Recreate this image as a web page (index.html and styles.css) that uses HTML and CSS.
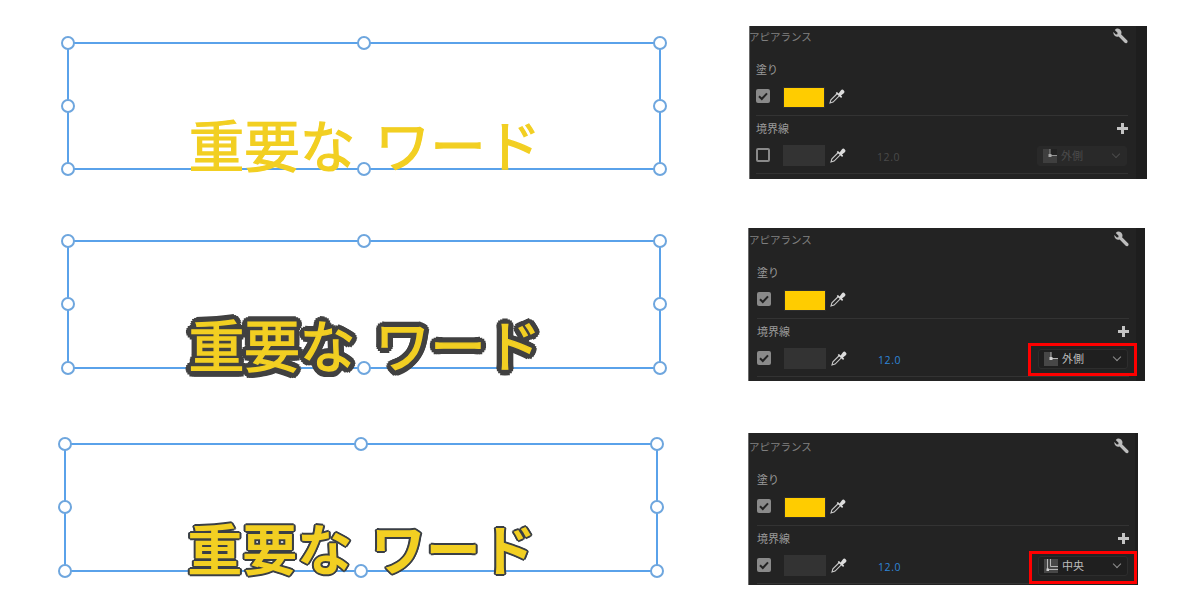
FILE: index.html
```html
<!DOCTYPE html>
<html lang="ja">
<head>
<meta charset="utf-8">
<title>アピアランス</title>
<link rel="stylesheet" href="styles.css">
</head>
<body>
<svg class="defs" width="0" height="0" aria-hidden="true">
  <symbol id="wrench" viewBox="0 0 16 16"><path d="M5.200.2a4.300 4.300 0 0 0-4.100 1.300L4 4.400 3.900 6.200 2.200 6.400-.4 3.800A4.300 4.300 0 0 0 5.200 8.600L11.700 15.200a1.800 1.800 0 0 0 3-.9 1.800 1.800 0 0 0-.5-1.700L7.800 6.200A4.300 4.300 0 0 0 5.200.2z" transform="translate(.8 0)"/></symbol>
  <symbol id="dropper" viewBox="0 0 16 16"><path class="drop-line" d="M8.800 5 1.900 11.900 1 15l3.100-.9L11 7.200"/><path class="drop-fill" d="M7.800 4 9.600 5.400l2.200-3a2 2 0 0 1 3 0 2 2 0 0 1 0 2.800L12 7.400l1.200 1.400-1.100 1.100-5.400-4.800z"/></symbol>
  <symbol id="check" viewBox="0 0 14 14"><path d="M3 7.300 5.800 10 11 4.300" fill="none" stroke-width="2"/></symbol>
  <symbol id="corner-out" viewBox="0 0 14 14"><path class="corner-bg" d="M0 0h14v14H0z"/><path class="corner-clear" d="M7 0h7v6H7z"/><path class="corner-ln" d="M7 0v6.500h7" fill="none"/><path class="corner-dot" d="M5.500 5h3v3h-3z"/></symbol>
  <symbol id="corner-mid" viewBox="0 0 14 14"><path class="corner-bg" d="M0 0h14v14H0z"/><path class="corner-ln" d="M3.500 0v10.500h10.500M6.500 0v7.500h7.500" fill="none"/><path class="corner-dot" d="M2.500 9.500h2.500v2.500H2.500z"/></symbol>
</svg>

<section class="row row-1">
  <div class="stage">
    <div class="frame">
      <p class="word">重要な ワード</p>
      <i class="handle tl"></i><i class="handle tc"></i><i class="handle tr"></i>
      <i class="handle ml"></i><i class="handle mr"></i>
      <i class="handle bl"></i><i class="handle bc"></i><i class="handle br"></i>
    </div>
  </div>
  <div class="panel">
    <div class="panel-body">
      <div class="title-row"><span class="title">アピアランス</span><svg class="wrench"><use href="#wrench"/></svg></div>
      <div class="label-row first">塗り</div>
      <div class="control fill-row">
        <span class="box on"><svg><use href="#check"/></svg></span>
        <span class="swatch"></span>
        <svg class="dropper"><use href="#dropper"/></svg>
      </div>
      <div class="label-row second">境界線<span class="plus"></span></div>
      <div class="control stroke-row dim">
        <span class="box"></span>
        <span class="swatch dark"></span>
        <svg class="dropper"><use href="#dropper"/></svg>
        <span class="value">12.0</span>
        <span class="dropdown"><svg class="corner"><use href="#corner-out"/></svg><span class="dd-text">外側</span><span class="chev"></span></span>
      </div>
    </div>
    <div class="strip"></div>
  </div>
</section>

<section class="row row-2">
  <div class="stage">
    <div class="frame">
      <p class="word outer">重要な ワード</p>
      <i class="handle tl"></i><i class="handle tc"></i><i class="handle tr"></i>
      <i class="handle ml"></i><i class="handle mr"></i>
      <i class="handle bl"></i><i class="handle bc"></i><i class="handle br"></i>
    </div>
  </div>
  <div class="panel">
    <div class="panel-body">
      <div class="title-row"><span class="title">アピアランス</span><svg class="wrench"><use href="#wrench"/></svg></div>
      <div class="label-row first">塗り</div>
      <div class="control fill-row">
        <span class="box on"><svg><use href="#check"/></svg></span>
        <span class="swatch"></span>
        <svg class="dropper"><use href="#dropper"/></svg>
      </div>
      <div class="label-row second">境界線<span class="plus"></span></div>
      <div class="control stroke-row">
        <span class="box on"><svg><use href="#check"/></svg></span>
        <span class="swatch dark"></span>
        <svg class="dropper"><use href="#dropper"/></svg>
        <span class="value">12.0</span>
        <span class="dropdown marked"><svg class="corner"><use href="#corner-out"/></svg><span class="dd-text">外側</span><span class="chev"></span></span>
      </div>
    </div>
    <div class="strip"></div>
  </div>
</section>

<section class="row row-3">
  <div class="stage">
    <div class="frame">
      <p class="word center">重要な ワード</p>
      <i class="handle tl"></i><i class="handle tc"></i><i class="handle tr"></i>
      <i class="handle ml"></i><i class="handle mr"></i>
      <i class="handle bl"></i><i class="handle bc"></i><i class="handle br"></i>
    </div>
  </div>
  <div class="panel">
    <div class="panel-body">
      <div class="title-row"><span class="title">アピアランス</span><svg class="wrench"><use href="#wrench"/></svg></div>
      <div class="label-row first">塗り</div>
      <div class="control fill-row">
        <span class="box on"><svg><use href="#check"/></svg></span>
        <span class="swatch"></span>
        <svg class="dropper"><use href="#dropper"/></svg>
      </div>
      <div class="label-row second">境界線<span class="plus"></span></div>
      <div class="control stroke-row">
        <span class="box on"><svg><use href="#check"/></svg></span>
        <span class="swatch dark"></span>
        <svg class="dropper"><use href="#dropper"/></svg>
        <span class="value">12.0</span>
        <span class="dropdown marked"><svg class="corner"><use href="#corner-mid"/></svg><span class="dd-text">中央</span><span class="chev"></span></span>
      </div>
    </div>
    <div class="strip"></div>
  </div>
</section>
</body>
</html>
```
FILE: styles.css
```css
* { box-sizing: border-box; }
html, body { margin: 0; padding: 0; }
body {
  width: 1200px;
  height: 600px;
  background: #fff;
  overflow: hidden;
  font-family: "Noto Sans CJK JP", "Noto Sans", sans-serif;
}
.defs { display: block; height: 0; }

/* rows */
.row { display: flex; align-items: flex-start; }
.row-1 { height: 200px; }
.row-2 { height: 205px; }
.row-3 { height: 195px; }

.stage { flex: none; }
.row-1 .stage { padding: 42px 0 0 67px; width: 749px; }
.row-2 .stage { padding: 40px 0 0 67px; width: 748px; }
.row-3 .stage { padding: 38px 0 0 64px; width: 748px; }

.frame {
  position: relative;
  width: 594px;
  height: 128px;
  display: flex;
  justify-content: center;
}
.row-2 .frame, .row-3 .frame { height: 129px; }
.frame::before {
  content: "";
  position: absolute;
  inset: 0;
  border: 2px solid #5aa2ea;
}

.word {
  margin: 0 0 0 2px;
  white-space: nowrap;
  font-size: 55.500px;
  line-height: 64px;
  font-weight: 400;
  color: #f2cf22;
  word-spacing: 7px;
  filter: blur(.4px);
}
.row-1 .word {
  padding-top: 69px;
  -webkit-text-stroke: 1.200px #f2cf22;
}
.row-2 .word { padding-top: 71px; }
.row-3 .word { padding-top: 71px; margin-left: 1px; font-size: 55px; word-spacing: 6px; font-weight: 700; }
.word.outer {
  -webkit-text-stroke: 1.400px #f2cf22;
  text-shadow:
    6px 0 .5px #414141, 5.500px 2.300px .5px #414141, 4.200px 4.200px .5px #414141, 2.300px 5.500px .5px #414141,
    0 6px .5px #414141, -2.300px 5.500px .5px #414141, -4.200px 4.200px .5px #414141, -5.500px 2.300px .5px #414141,
    -6px 0 .5px #414141, -5.500px -2.300px .5px #414141, -4.200px -4.200px .5px #414141, -2.300px -5.500px .5px #414141,
    0 -6px .5px #414141, 2.300px -5.500px .5px #414141, 4.200px -4.200px .5px #414141, 5.500px -2.300px .5px #414141,
    3px 0 0 #414141, -3px 0 0 #414141, 0 3px 0 #414141, 0 -3px 0 #414141;
}
.word.center {
  text-shadow:
    2px 0 .5px #3a3f45, 1.400px 1.400px .5px #3a3f45, 0 2px .5px #3a3f45, -1.400px 1.400px .5px #3a3f45,
    -2px 0 .5px #3a3f45, -1.400px -1.400px .5px #3a3f45, 0 -2px .5px #3a3f45, 1.400px -1.400px .5px #3a3f45;
}

/* selection handles sit over the frame */
.handle {
  position: absolute;
  width: 14px;
  height: 14px;
  border-radius: 50%;
  background: #fff;
  border: 2px solid #6ea6de;
}
.tl { left: -6px; top: -6px; }
.tc { left: 290px; top: -6px; }
.tr { right: -6px; top: -6px; }
.ml { left: -6px; top: 57px; }
.mr { right: -6px; top: 57px; }
.bl { left: -6px; bottom: -6px; }
.bc { left: 290px; bottom: -6px; }
.br { right: -6px; bottom: -6px; }

/* panel */
.panel {
  flex: none;
  display: flex;
  height: 153px;
  background: #232323;
  border-left: 1px solid #6b6b6b;
  overflow: hidden;
  color: #9a9a9a;
  font-size: 11px;
}
.row-1 .panel { margin-top: 26px; width: 398px; }
.row-2 .panel { margin-top: 28px; width: 397px; }
.row-3 .panel { margin-top: 28px; width: 390px; height: 152px; }
.panel-body { flex: none; width: 386px; padding: 0 8px 0 6px; }
.row-2 .panel-body { padding: 1px 7px 0 8px; width: 387px; }
.row-3 .panel-body { padding: 3px 6px 0 8px; width: 386px; }
.strip { flex: 1; background: #1e1e1e; }

.title-row {
  display: flex;
  justify-content: space-between;
  align-items: center;
  height: 20px;
  margin-left: -7px;
}
.title { color: #808080; font-size: 10.500px; }
.row-2 .title-row, .row-3 .title-row { margin-left: -8px; }
.wrench { width: 15px; height: 16px; fill: #bdbdbd; }

.label-row {
  display: flex;
  align-items: center;
  justify-content: space-between;
  height: 20px;
}
.label-row.first { margin-top: 13px; }
.label-row.second { margin-top: 2px; }
.plus {
  width: 11px;
  height: 11px;
  background:
    linear-gradient(#c4c4c4, #c4c4c4) center / 11px 3px no-repeat,
    linear-gradient(#c4c4c4, #c4c4c4) center / 3px 11px no-repeat;
}

.control {
  display: flex;
  align-items: center;
  border-bottom: 1px solid #333;
}
.fill-row { margin-top: 8px; height: 29px; padding-bottom: 8px; }
.stroke-row { margin-top: 7px; height: 29px; padding-bottom: 7px; }

.box {
  flex: none;
  width: 14px;
  height: 14px;
  border: 2px solid #8a8a8a;
  border-radius: 2px;
  margin: 0 14px 2px 0;
}
.box.on { background: #8a8a8a; border: 0; }
.box svg { display: block; width: 14px; height: 14px; stroke: #222; }

.swatch {
  flex: none;
  width: 40px;
  height: 19px;
  background: #fc0;
  outline: 1px solid #2e2e2e;
}
.swatch.dark { width: 42px; height: 21px; background: #333; outline: 0; margin-left: -1px; }
.dropper { flex: none; width: 16px; height: 16px; margin: 0 0 2px 5px; }
.drop-line { fill: none; stroke: #c8c8c8; stroke-width: 1.100; }
.drop-fill { fill: #dcdcdc; }

.value {
  margin: 2px 0 0 31px;
  color: #2f86d8;
  font-family: "Open Sans", sans-serif;
  font-size: 10.500px;
  letter-spacing: 0.6px;
}
.dropdown {
  position: relative;
  margin-left: auto;
  margin-right: 1px;
  flex: none;
  display: flex;
  align-items: center;
  width: 90px;
  height: 20px;
  padding: 0 5px;
  background: #1f1f1f;
  border: 1px solid #2d2d2d;
  border-radius: 3px;
  color: #bdbdbd;
}
.dropdown.marked::after {
  content: "";
  position: absolute;
  left: -11px;
  right: -10px;
  top: -7px;
  bottom: -8px;
  border: 3px solid #f00;
}
.row-3 .dropdown.marked::after { left: -10px; top: -6px; bottom: -9px; }
.corner { width: 14px; height: 14px; flex: none; }
.corner-bg { fill: #474747; }
.corner-clear { fill: #1f1f1f; }
.corner-ln { stroke: #b5b5b5; stroke-width: 1; }
.corner-dot { fill: #d0d0d0; }
.dd-text { margin: -2px 0 0 4px; }
.chev {
  margin-left: auto;
  margin-right: 2px;
  width: 6px;
  height: 6px;
  border-right: 1px solid #8f8f8f;
  border-bottom: 1px solid #8f8f8f;
  transform: translateY(-2px) rotate(45deg);
}

/* disabled state of the first stroke row */
.dim .value { color: #4a4a4a; }
.dim .dropdown { background: #292929; border-color: #292929; color: #4c4c4c; }
.dim .corner { opacity: .75; }
.dim .corner-clear { fill: #292929; }
.dim .chev { border-color: #4a4a4a; }
```
